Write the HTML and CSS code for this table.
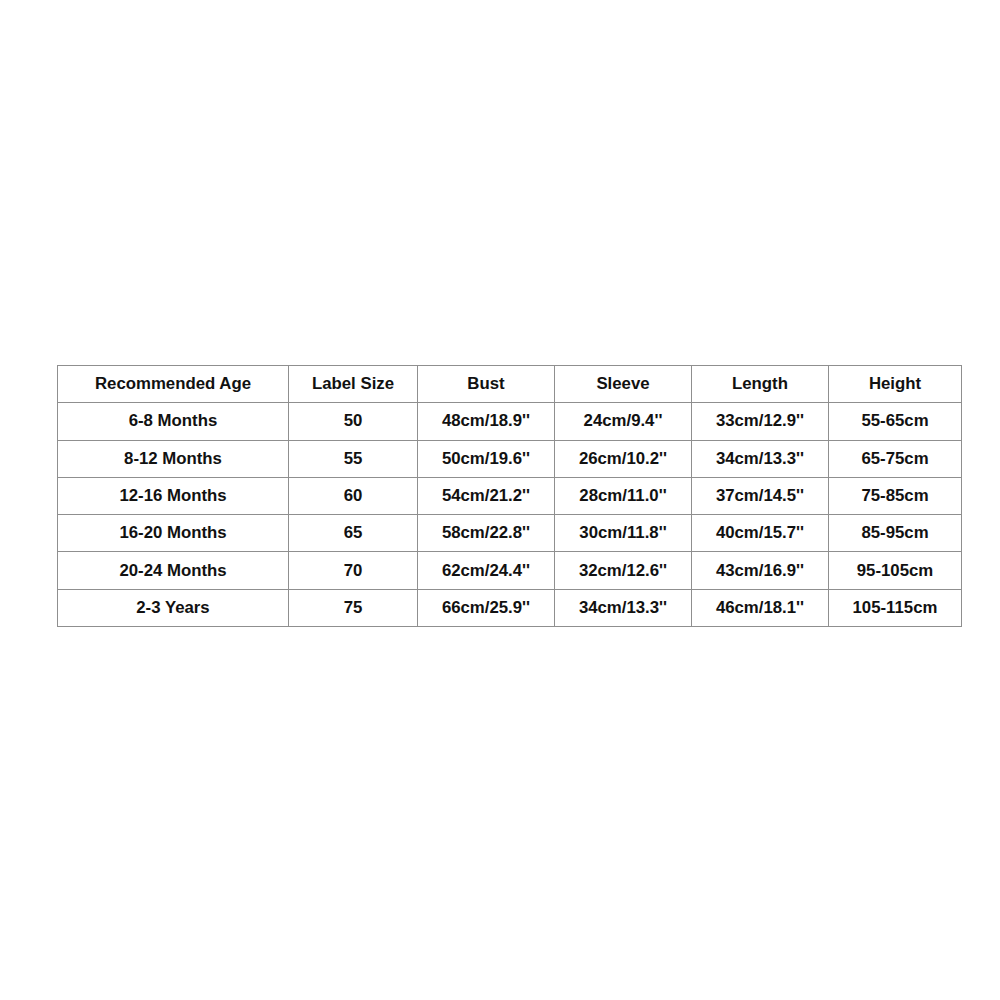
FILE: index.html
```html
<!DOCTYPE html>
<html>
<head>
<meta charset="utf-8">
<link rel="stylesheet" href="styles.css">
</head>
<body>
<div class="page">
<table class="size-table">
<colgroup>
<col class="c1"><col class="c2"><col class="c3"><col class="c4"><col class="c5"><col class="c6">
</colgroup>
<tr><td>Recommended Age</td><td>Label Size</td><td>Bust</td><td>Sleeve</td><td>Length</td><td>Height</td></tr>
<tr><td>6-8 Months</td><td>50</td><td>48cm/18.9''</td><td>24cm/9.4''</td><td>33cm/12.9''</td><td>55-65cm</td></tr>
<tr><td>8-12 Months</td><td>55</td><td>50cm/19.6''</td><td>26cm/10.2''</td><td>34cm/13.3''</td><td>65-75cm</td></tr>
<tr><td>12-16 Months</td><td>60</td><td>54cm/21.2''</td><td>28cm/11.0''</td><td>37cm/14.5''</td><td>75-85cm</td></tr>
<tr><td>16-20 Months</td><td>65</td><td>58cm/22.8''</td><td>30cm/11.8''</td><td>40cm/15.7''</td><td>85-95cm</td></tr>
<tr><td>20-24 Months</td><td>70</td><td>62cm/24.4''</td><td>32cm/12.6''</td><td>43cm/16.9''</td><td>95-105cm</td></tr>
<tr><td>2-3 Years</td><td>75</td><td>66cm/25.9''</td><td>34cm/13.3''</td><td>46cm/18.1''</td><td>105-115cm</td></tr>
</table>
</div>
</body>
</html>
```
FILE: styles.css
```css
html, body { margin: 0; padding: 0; background: #fff; }
.page { width: 1000px; height: 1000px; padding-top: 365px; padding-left: 57px; box-sizing: border-box; }
.size-table {
  border-collapse: collapse;
  table-layout: fixed;
  width: 904px;
  font-family: "Liberation Sans", Arial, sans-serif;
  font-weight: bold;
  font-size: 16.8px;
  color: #111;
}
.c1 { width: 231px; }
.c2 { width: 129px; }
.c3 { width: 137px; }
.c4 { width: 137px; }
.c5 { width: 137px; }
.c6 { width: 133px; }
.size-table tr { height: 37.3px; }
.size-table td {
  border: 1px solid #8f8f8f;
  padding: 0;
  text-align: center;
  vertical-align: middle;
}
```
